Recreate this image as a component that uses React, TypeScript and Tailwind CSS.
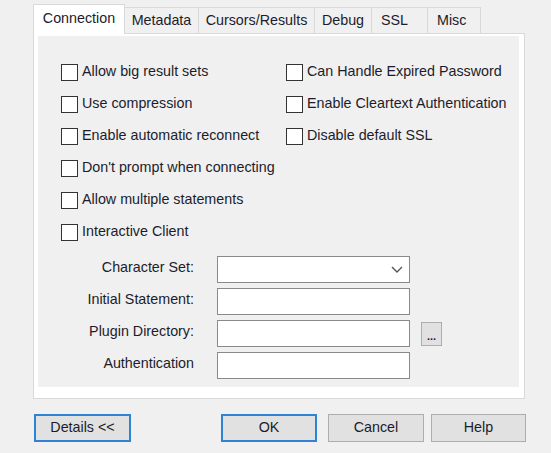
import React from 'react'

const tabs = [
  { label: 'Connection', w: 'w-[92px]', active: true },
  { label: 'Metadata', w: 'w-[74px]' },
  { label: 'Cursors/Results', w: 'w-[116px]' },
  { label: 'Debug', w: 'w-[57px]' },
  { label: 'SSL', w: 'w-[56px]', left: true },
  { label: 'Misc', w: 'w-[53px]', left: true },
]

function Check({ label }: { label: string }) {
  return (
    <div className="flex items-center h-[32px]">
      <span className="w-[17px] h-[17px] border border-[#333] bg-white shrink-0" />
      <span className="ml-[4px] whitespace-nowrap">{label}</span>
    </div>
  )
}

function Field({ label, children }: { label: string, children: React.ReactNode }) {
  return (
    <div className="flex items-center h-[27px]">
      <div className="w-[156px] text-right whitespace-nowrap -mt-[3px]">{label}</div>
      <div className="ml-[23px] flex items-center">{children}</div>
    </div>
  )
}

function Btn({ label, w, primary }: { label: string, w: string, primary?: boolean }) {
  return (
    <div
      className={
        primary
          ? `${w} h-[28px] bg-[#e1e1e1] border-2 border-[#2d84d5] flex items-center justify-center`
          : `${w} h-[28px] bg-[#e1e1e1] border border-[#adadad] flex items-center justify-center`
      }
    >
      {label}
    </div>
  )
}

export default function App() {
  return (
    <div
      className="w-[551px] h-[453px] bg-[#f0f0f0] pt-[4px] pl-[33px] text-[14.3px] text-[#1c1c2c]"
      style={{ fontFamily: '"Liberation Sans", Arial, sans-serif' }}
    >
      <div className="flex items-end h-[29px]">
        {tabs.map(t => (
          <div
            key={t.label}
            className={
              t.active
                ? `${t.w} h-[30px] -mb-px relative z-10 bg-white border border-b-0 border-[#d9d9d9] flex items-center justify-center pb-[2px]`
                : `${t.w} h-[26px] bg-[#f0f0f0] border border-l-0 border-b-0 border-[#d9d9d9] flex items-center ${t.left ? 'pl-[9px]' : 'justify-center'}`
            }
          >
            {t.label}
          </div>
        ))}
      </div>

      <div className="w-[492px] h-[366px] bg-white border border-[#d9d9d9] pt-[2px] pl-[4px] pr-[5px] pb-[11px]">
        <div className="h-full bg-[#f0f0f0] pt-[20px]">
          <div className="flex pl-[23px]">
            <div className="w-[225px] flex flex-col">
              <Check label="Allow big result sets" />
              <Check label="Use compression" />
              <Check label="Enable automatic reconnect" />
              <Check label="Don't prompt when connecting" />
              <Check label="Allow multiple statements" />
              <Check label="Interactive Client" />
            </div>
            <div className="flex flex-col">
              <Check label="Can Handle Expired Password" />
              <Check label="Enable Cleartext Authentication" />
              <Check label="Disable default SSL" />
            </div>
          </div>

          <div className="mt-[8px] flex flex-col gap-[5px]">
            <Field label="Character Set:">
              <div className="w-[193px] h-[27px] bg-white border border-[#8a8a8a] flex items-center justify-end pr-[6px]">
                <svg width="12" height="7" viewBox="0 0 12 7">
                  <polyline points="1,1 6,6 11,1" fill="none" stroke="#555" strokeWidth="1.4" />
                </svg>
              </div>
            </Field>
            <Field label="Initial Statement:">
              <div className="w-[193px] h-[27px] bg-white border border-[#8a8a8a]" />
            </Field>
            <Field label="Plugin Directory:">
              <div className="w-[193px] h-[27px] bg-white border border-[#8a8a8a]" />
              <div className="ml-[11px] w-[21px] h-[24px] bg-[#e1e1e1] border border-[#adadad] flex items-end justify-center pb-[3px] text-[11px] leading-none font-bold">
                ...
              </div>
            </Field>
            <Field label="Authentication">
              <div className="w-[193px] h-[27px] bg-white border border-[#8a8a8a]" />
            </Field>
          </div>
        </div>
      </div>

      <div className="flex mt-[15px] ml-[1px]">
        <Btn label="Details <<" w="w-[97px]" primary />
        <div className="ml-[90px]"><Btn label="OK" w="w-[96px]" primary /></div>
        <div className="ml-[11px]"><Btn label="Cancel" w="w-[96px]" /></div>
        <div className="ml-[7px]"><Btn label="Help" w="w-[95px]" /></div>
      </div>
    </div>
  )
}
